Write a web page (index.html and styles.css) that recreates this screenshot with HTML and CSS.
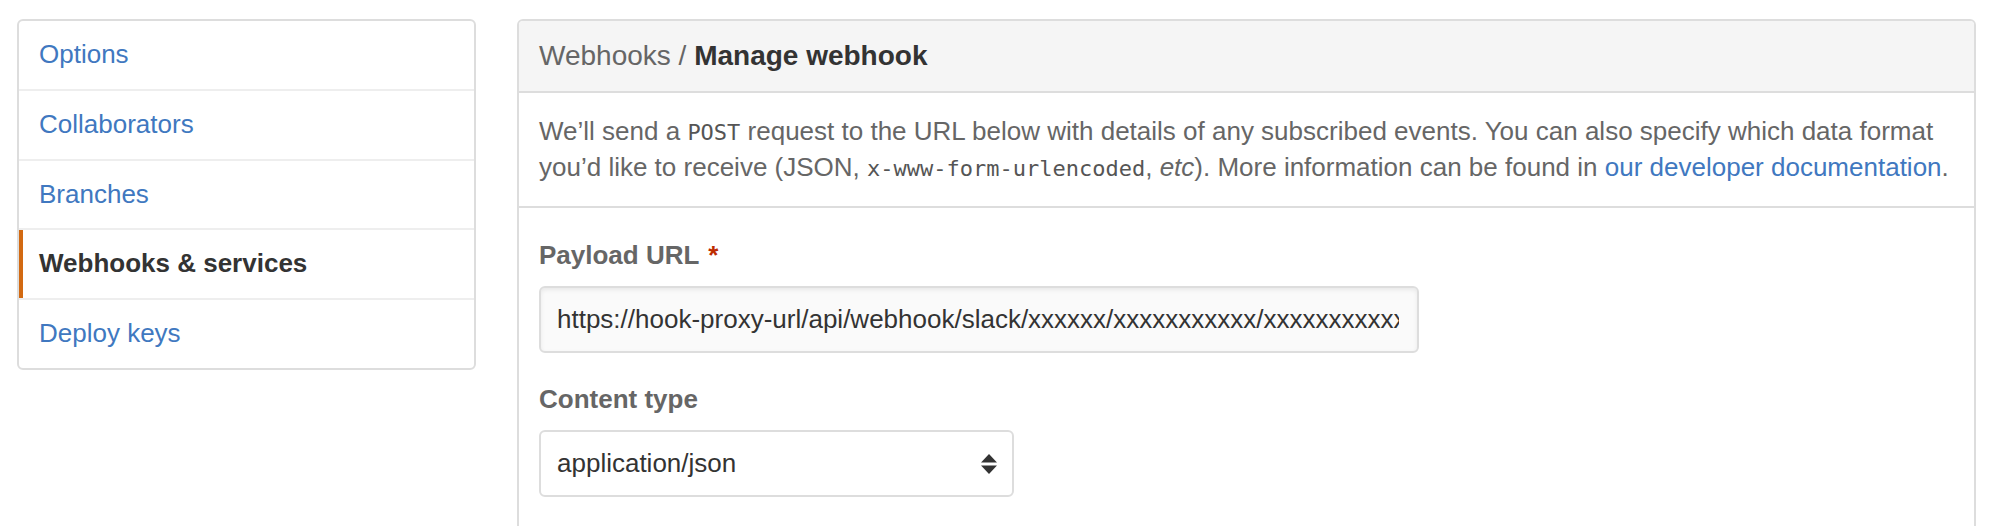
FILE: index.html
```html
<!DOCTYPE html>
<html lang="en">
<head>
<meta charset="utf-8">
<title>Manage webhook</title>
<link rel="stylesheet" href="styles.css">
</head>
<body>
<div class="layout">
  <nav class="menu">
    <a class="menu-item" href="#">Options</a>
    <a class="menu-item" href="#">Collaborators</a>
    <a class="menu-item" href="#">Branches</a>
    <a class="menu-item selected" href="#">Webhooks &amp; services</a>
    <a class="menu-item" href="#">Deploy keys</a>
  </nav>
  <section class="panel">
    <h3 class="panel-head"><span class="crumb">Webhooks /</span> <strong>Manage webhook</strong></h3>
    <p class="panel-desc">We’ll send a <code>POST</code> request to the URL below with details of any subscribed events. You can also specify which data format you’d like to receive (JSON, <code>x-www-form-urlencoded</code>, <em>etc</em>). More information can be found in <a href="#">our developer documentation</a>.</p>
    <div class="panel-form">
      <div class="group">
        <label class="label">Payload URL <span class="req">*</span></label>
        <div class="field input"><div class="value">https://hook-proxy-url/api/webhook/slack/xxxxxx/xxxxxxxxxxx/xxxxxxxxxxxxxxxxxxxxxxxx</div></div>
      </div>
      <div class="group">
        <label class="label">Content type</label>
        <div class="field select">
          <span class="value">application/json</span>
          <svg class="arrows" width="16" height="20" viewBox="0 0 16 20" aria-hidden="true"><polygon points="0,8.5 8,0 16,8.5" fill="#333"/><polygon points="0,11.5 16,11.5 8,20" fill="#333"/></svg>
        </div>
      </div>
    </div>
  </section>
</div>
</body>
</html>
```
FILE: styles.css
```css
html, body {
  margin: 0;
  padding: 0;
  background: #fff;
  overflow: hidden;
}
body {
  font-family: "Liberation Sans", Arial, Helvetica, sans-serif;
  font-size: 26px;
  color: #333;
}
.layout {
  display: flex;
  align-items: flex-start;
  gap: 41px;
  padding: 19px 0 0 17px;
}
.menu {
  width: 459px;
  box-sizing: border-box;
  border: 2px solid #ddd;
  border-radius: 6px;
  display: flex;
  flex-direction: column;
  flex: none;
}
.menu-item {
  display: block;
  height: 67.8px;
  line-height: 67.8px;
  padding: 0 20px;
  border-bottom: 2px solid #eee;
  color: #4078c0;
  text-decoration: none;
  font-size: 26px;
  position: relative;
}
.menu-item:last-child {
  border-bottom: none;
}
.menu-item.selected {
  color: #333;
  font-weight: bold;
}
.menu-item.selected::before {
  content: "";
  position: absolute;
  left: 0;
  top: 0;
  bottom: 0;
  width: 4px;
  background: #d26911;
}
.panel {
  width: 1459px;
  box-sizing: border-box;
  border: 2px solid #ddd;
  border-radius: 6px 6px 0 0;
  flex: none;
  padding-bottom: 200px;
}
.panel-head {
  margin: 0;
  height: 70px;
  line-height: 70px;
  padding: 0 20px;
  background: #f5f5f5;
  border-bottom: 2px solid #ddd;
  border-radius: 4px 4px 0 0;
  font-size: 28px;
  font-weight: normal;
  color: #333;
}
.crumb {
  color: #666;
}
.panel-head strong {
  font-weight: bold;
  color: #333;
}
.panel-desc {
  margin: 0;
  padding: 20px 20px 21px;
  line-height: 36px;
  font-size: 26px;
  color: #666;
  border-bottom: 2px solid #ddd;
}
.panel-desc code {
  font-family: "DejaVu Sans Mono", "Liberation Mono", monospace;
  font-size: 22px;
  line-height: 1;
  color: #555;
}
.panel-desc em {
  font-style: italic;
}
.panel-desc a {
  color: #4078c0;
  text-decoration: none;
}
.panel-form {
  padding: 27px 20px 0;
}
.group {
  margin-bottom: 26px;
}
.label {
  display: block;
  line-height: 40px;
  font-size: 26px;
  font-weight: bold;
  color: #666;
}
.req {
  color: #bd2c00;
  margin-left: 2px;
}
.field {
  margin-top: 11px;
  box-sizing: border-box;
  height: 67px;
  border: 2px solid #ddd;
  border-radius: 6px;
  padding: 0 16px;
  font-size: 26px;
  color: #333;
  display: flex;
  align-items: center;
}
.input {
  width: 880px;
  background: #fafafa;
  box-shadow: inset 0 2px 4px rgba(0, 0, 0, 0.075);
  padding-right: 18px;
}
.input .value {
  flex: 1;
  overflow: hidden;
  white-space: nowrap;
}
.select {
  width: 475px;
  background: #fff;
  justify-content: space-between;
  padding-right: 15px;
}
.arrows {
  display: block;
  flex: none;
}
```
